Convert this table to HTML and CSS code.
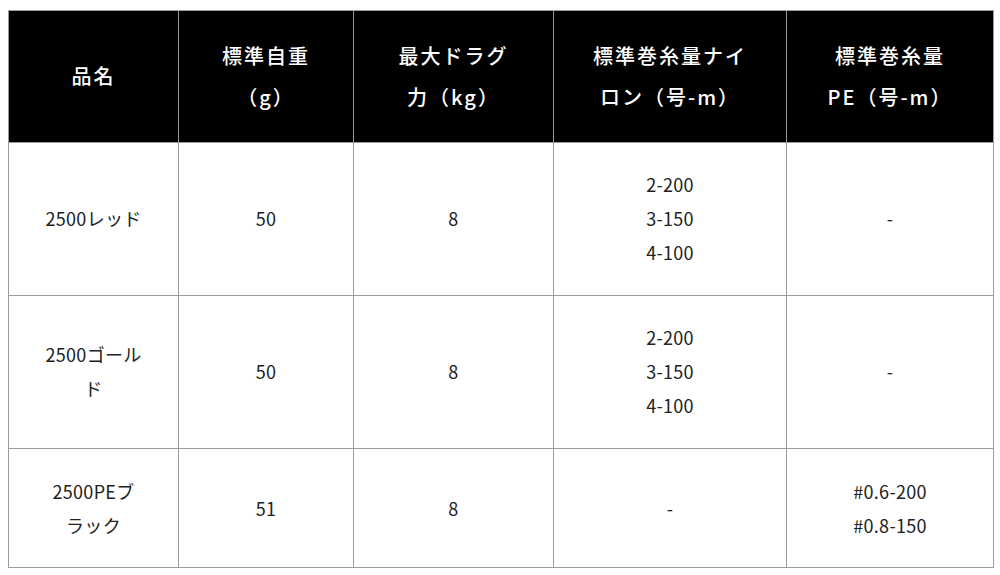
FILE: index.html
```html
<!DOCTYPE html>
<html lang="ja">
<head>
<meta charset="utf-8">
<link rel="stylesheet" href="styles.css">
</head>
<body>
<table class="spec">
  <colgroup>
    <col class="c1"><col class="c2"><col class="c3"><col class="c4"><col class="c5">
  </colgroup>
  <thead>
    <tr>
      <th>品名</th>
      <th>標準自重<br>（g）</th>
      <th>最大ドラグ<br>力（kg）</th>
      <th>標準巻糸量ナイ<br>ロン（号-m）</th>
      <th>標準巻糸量<br>PE（号-m）</th>
    </tr>
  </thead>
  <tbody>
    <tr>
      <td>2500レッド</td>
      <td>50</td>
      <td>8</td>
      <td>2-200<br>3-150<br>4-100</td>
      <td>-</td>
    </tr>
    <tr>
      <td>2500ゴール<br>ド</td>
      <td>50</td>
      <td>8</td>
      <td>2-200<br>3-150<br>4-100</td>
      <td>-</td>
    </tr>
    <tr>
      <td>2500PEブ<br>ラック</td>
      <td>51</td>
      <td>8</td>
      <td>-</td>
      <td>#0.6-200<br>#0.8-150</td>
    </tr>
  </tbody>
</table>
</body>
</html>
```

FILE: styles.css
```css
html, body {
  margin: 0;
  padding: 0;
  background: #fff;
}
body {
  padding: 10px 7px 0 8px;
  font-family: "Noto Sans CJK JP", "Noto Sans", sans-serif;
}
.spec {
  border-collapse: collapse;
  table-layout: fixed;
  width: 985px;
}
.c1 { width: 170px; }
.c2 { width: 175px; }
.c3 { width: 200px; }
.c4 { width: 233px; }
.c5 { width: 207px; }
.spec th,
.spec td {
  border: 1px solid #9a9a9a;
  text-align: center;
  vertical-align: middle;
  padding: 0 10px;
}
.spec th {
  background: #000;
  color: #fff;
  font-weight: 500;
  font-size: 20px;
  letter-spacing: 2px;
  line-height: 41px;
  height: 129px;
  padding-bottom: 2px;
}
.spec td {
  color: #222;
  font-size: 18px;
  line-height: 34px;
  letter-spacing: 0.3px;
}
.spec tbody tr:nth-child(1) td,
.spec tbody tr:nth-child(2) td {
  height: 150px;
  padding-bottom: 2px;
}
.spec tbody tr:nth-child(3) td {
  height: 118px;
}
```
